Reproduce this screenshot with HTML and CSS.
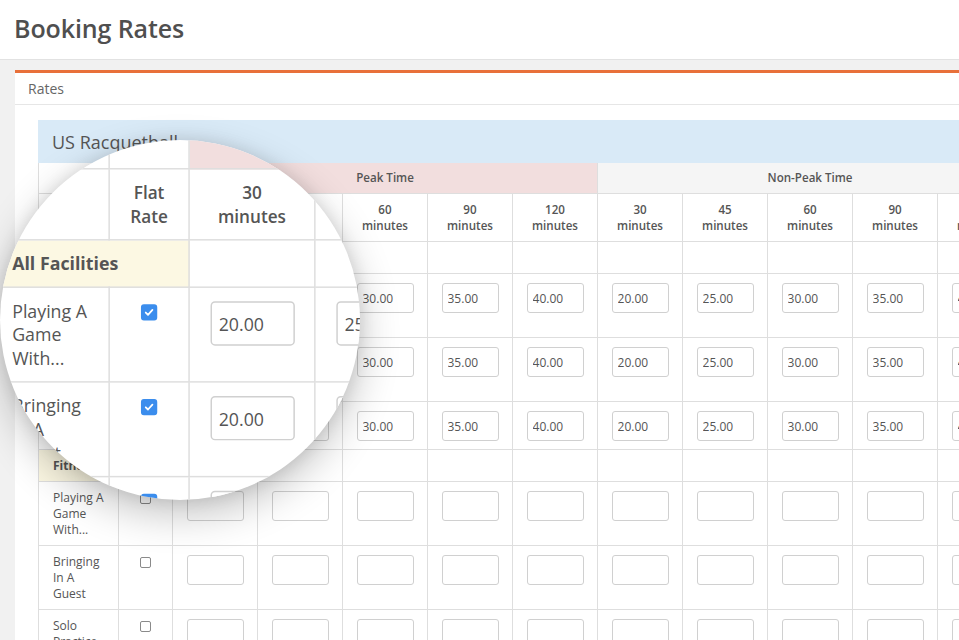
FILE: index.html
```html
<!DOCTYPE html>
<html lang="en">
<head>
<meta charset="utf-8">
<title>Booking Rates</title>
<link rel="stylesheet" href="styles.css">
</head>
<body>
<header class="topbar"><h1>Booking Rates</h1></header>
<main class="main">
  <section class="panel">
    <div class="panel-head">Rates</div>
    <div class="panel-body">
      <div class="rates-block">
        <div class="sport">US Racquetball</div>
        <table class="rates">
          <colgroup><col class="c-name"><col class="c-flat"><col span="10" class="c-rate"></colgroup>
          <thead>
            <tr class="group"><th></th><th></th><th colspan="5" class="peak">Peak Time</th><th colspan="5" class="nonpeak">Non-Peak Time</th></tr>
            <tr class="cols"><th></th><th>Flat<br>Rate</th><th>30<br>minutes</th><th>45<br>minutes</th><th>60<br>minutes</th><th>90<br>minutes</th><th>120<br>minutes</th><th>30<br>minutes</th><th>45<br>minutes</th><th>60<br>minutes</th><th>90<br>minutes</th><th>120<br>minutes</th></tr>
          </thead>
          <tbody>
            <tr class="section"><td colspan="2" class="sec-name">All Facilities</td><td></td><td></td><td></td><td></td><td></td><td></td><td></td><td></td><td></td><td></td></tr>
            <tr><td class="name">Playing A Game With...</td><td class="flat"><span class="cb on"><svg viewBox="0 0 12 12"><path d="M3 6.2l2 2 4-4.4"/></svg></span></td><td><input class="rate" value="20.00"></td><td><input class="rate" value="25.00"></td><td><input class="rate" value="30.00"></td><td><input class="rate" value="35.00"></td><td><input class="rate" value="40.00"></td><td><input class="rate" value="20.00"></td><td><input class="rate" value="25.00"></td><td><input class="rate" value="30.00"></td><td><input class="rate" value="35.00"></td><td><input class="rate" value="40.00"></td></tr>
            <tr><td class="name">Bringing In A Guest</td><td class="flat"><span class="cb on"><svg viewBox="0 0 12 12"><path d="M3 6.2l2 2 4-4.4"/></svg></span></td><td><input class="rate" value="20.00"></td><td><input class="rate" value="25.00"></td><td><input class="rate" value="30.00"></td><td><input class="rate" value="35.00"></td><td><input class="rate" value="40.00"></td><td><input class="rate" value="20.00"></td><td><input class="rate" value="25.00"></td><td><input class="rate" value="30.00"></td><td><input class="rate" value="35.00"></td><td><input class="rate" value="40.00"></td></tr>
            <tr><td class="name">Solo Practice</td><td class="flat"><span class="cb on"><svg viewBox="0 0 12 12"><path d="M3 6.2l2 2 4-4.4"/></svg></span></td><td><input class="rate" value="20.00"></td><td><input class="rate" value="25.00"></td><td><input class="rate" value="30.00"></td><td><input class="rate" value="35.00"></td><td><input class="rate" value="40.00"></td><td><input class="rate" value="20.00"></td><td><input class="rate" value="25.00"></td><td><input class="rate" value="30.00"></td><td><input class="rate" value="35.00"></td><td><input class="rate" value="40.00"></td></tr>
            <tr class="section"><td colspan="2" class="sec-name">Fitness Center</td><td></td><td></td><td></td><td></td><td></td><td></td><td></td><td></td><td></td><td></td></tr>
            <tr><td class="name">Playing A Game With...</td><td class="flat"><span class="cb"></span></td><td><input class="rate"></td><td><input class="rate"></td><td><input class="rate"></td><td><input class="rate"></td><td><input class="rate"></td><td><input class="rate"></td><td><input class="rate"></td><td><input class="rate"></td><td><input class="rate"></td><td><input class="rate"></td></tr>
            <tr><td class="name">Bringing In A Guest</td><td class="flat"><span class="cb"></span></td><td><input class="rate"></td><td><input class="rate"></td><td><input class="rate"></td><td><input class="rate"></td><td><input class="rate"></td><td><input class="rate"></td><td><input class="rate"></td><td><input class="rate"></td><td><input class="rate"></td><td><input class="rate"></td></tr>
            <tr><td class="name">Solo Practice</td><td class="flat"><span class="cb"></span></td><td><input class="rate"></td><td><input class="rate"></td><td><input class="rate"></td><td><input class="rate"></td><td><input class="rate"></td><td><input class="rate"></td><td><input class="rate"></td><td><input class="rate"></td><td><input class="rate"></td><td><input class="rate"></td></tr>
          </tbody>
        </table>
      </div>
    </div>
  </section>
</main>

<div class="lens" aria-hidden="true">
  <div class="rates-block zoomed">
    <div class="sport">US Racquetball</div>
    <table class="rates">
      <colgroup><col class="c-name"><col class="c-flat"><col span="10" class="c-rate"></colgroup>
      <thead>
        <tr class="group"><th></th><th></th><th colspan="5" class="peak">Peak Time</th><th colspan="5" class="nonpeak">Non-Peak Time</th></tr>
        <tr class="cols"><th></th><th>Flat<br>Rate</th><th>30<br>minutes</th><th>45<br>minutes</th><th>60<br>minutes</th><th>90<br>minutes</th><th>120<br>minutes</th><th>30<br>minutes</th><th>45<br>minutes</th><th>60<br>minutes</th><th>90<br>minutes</th><th>120<br>minutes</th></tr>
      </thead>
      <tbody>
        <tr class="section"><td colspan="2" class="sec-name">All Facilities</td><td></td><td></td><td></td><td></td><td></td><td></td><td></td><td></td><td></td><td></td></tr>
        <tr><td class="name">Playing A Game With...</td><td class="flat"><span class="cb on"><svg viewBox="0 0 12 12"><path d="M3 6.2l2 2 4-4.4"/></svg></span></td><td><input class="rate" value="20.00" tabindex="-1"></td><td><input class="rate" value="25.00" tabindex="-1"></td><td><input class="rate" value="30.00" tabindex="-1"></td><td><input class="rate" value="35.00" tabindex="-1"></td><td><input class="rate" value="40.00" tabindex="-1"></td><td></td><td></td><td></td><td></td><td></td></tr>
        <tr><td class="name">Bringing In A Guest</td><td class="flat"><span class="cb on"><svg viewBox="0 0 12 12"><path d="M3 6.2l2 2 4-4.4"/></svg></span></td><td><input class="rate" value="20.00" tabindex="-1"></td><td><input class="rate" value="25.00" tabindex="-1"></td><td><input class="rate" value="30.00" tabindex="-1"></td><td><input class="rate" value="35.00" tabindex="-1"></td><td><input class="rate" value="40.00" tabindex="-1"></td><td></td><td></td><td></td><td></td><td></td></tr>
        <tr><td class="name">Solo Practice</td><td class="flat"><span class="cb on"><svg viewBox="0 0 12 12"><path d="M3 6.2l2 2 4-4.4"/></svg></span></td><td><input class="rate" value="20.00" tabindex="-1"></td><td><input class="rate" value="25.00" tabindex="-1"></td><td><input class="rate" value="30.00" tabindex="-1"></td><td><input class="rate" value="35.00" tabindex="-1"></td><td><input class="rate" value="40.00" tabindex="-1"></td><td></td><td></td><td></td><td></td><td></td></tr>
        <tr class="section"><td colspan="2" class="sec-name">Fitness Center</td><td></td><td></td><td></td><td></td><td></td><td></td><td></td><td></td><td></td><td></td></tr>
        <tr><td class="name">Playing A Game With...</td><td class="flat"><span class="cb"></span></td><td><input class="rate" tabindex="-1"></td><td><input class="rate" tabindex="-1"></td><td><input class="rate" tabindex="-1"></td><td></td><td></td><td></td><td></td><td></td><td></td><td></td></tr>
      </tbody>
    </table>
  </div>
</div>
</body>
</html>
```

FILE: styles.css
```css
html, body {
  margin: 0;
  padding: 0;
  overflow: hidden;
}
body {
  position: relative;
  width: 959px;
  height: 640px;
  background: #f1f1f1;
  font-family: "Open Sans", "Noto Sans", sans-serif;
  color: #555;
}
.topbar {
  height: 60px;
  box-sizing: border-box;
  background: #fff;
  border-bottom: 1px solid #e2e2e2;
  display: flex;
  align-items: center;
  padding: 0 0 4px 14px;
}
.topbar h1 {
  margin: 0;
  font-size: 25px;
  font-weight: 600;
  color: #4f4f4f;
  letter-spacing: -0.1px;
}
.main {
  padding: 10px 0 0 15px;
}
.panel {
  width: 1100px;
  background: #fff;
  border-top: 3px solid #e8703a;
  height: 600px;
}
.panel-head {
  height: 31px;
  border-bottom: 1px solid #e6e6e6;
  display: flex;
  align-items: center;
  padding-left: 13px;
  font-size: 14px;
  color: #666;
}
.panel-body {
  padding: 15px 0 0 23px;
}
.rates-block {
  width: 984px;
}
.sport {
  height: 43px;
  box-sizing: border-box;
  background: #d9eaf7;
  display: flex;
  align-items: center;
  padding-left: 14px;
  font-size: 18px;
  color: #555;
}
.rates {
  width: 984px;
  border-collapse: collapse;
  table-layout: fixed;
  font-size: 12px;
  line-height: 16px;
  color: #555;
}
.c-name { width: 80px; }
.c-flat { width: 54px; }
.c-rate { width: 85px; }
.rates th,
.rates td {
  border: 1px solid #dedede;
  padding: 0;
}
.rates tr:first-child th { border-top: 0; }
.rates th {
  font-weight: 600;
  font-size: 11.6px;
  text-align: center;
  vertical-align: middle;
}
.rates .group th {
  height: 30px;
}
.rates .cols th {
  height: 47px;
}
.rates .peak { background: #f2dede; }
.rates .nonpeak { background: #f5f5f5; }
.rates td {
  vertical-align: top;
  text-align: center;
  padding-top: 8px;
}
.rates .section td {
  height: 31px;
  padding: 0;
}
.rates .section td.sec-name {
  background: #fcf8e3;
  font-weight: 700;
  text-align: left;
  padding: 0 0 0 14px;
  vertical-align: middle;
}
.rates td.name {
  text-align: left;
  padding: 8px 14px 7px;
}
.rates td.flat {
  padding-top: 11px;
}
.cb {
  display: inline-block;
  width: 11px;
  height: 11px;
  box-sizing: border-box;
  border: 1px solid #8a8a8a;
  border-radius: 2px;
  background: #fff;
  vertical-align: top;
}
.cb svg {
  display: block;
  width: 100%;
  height: 100%;
}
.cb svg path {
  fill: none;
  stroke: #fff;
  stroke-width: 1.6;
  stroke-linecap: round;
  stroke-linejoin: round;
}
.cb.on {
  background: #3b8ded;
  border-color: #3b8ded;
}
.rate {
  display: block;
  margin: 1px auto 0;
  width: 57px;
  height: 30px;
  box-sizing: border-box;
  border: 1px solid #d0d0d0;
  border-radius: 3px;
  padding: 0 5px;
  font-family: "Open Sans", "Noto Sans", sans-serif;
  font-size: 12px;
  color: #555;
  background: #fff;
  outline: none;
}

/* magnifier lens overlaying the table */
.lens {
  position: absolute;
  left: 0;
  top: 140px;
  width: 360px;
  height: 360px;
  border-radius: 50%;
  overflow: hidden;
  background: #fff;
  box-shadow: 0 14px 40px rgba(0, 0, 0, 0.24), 0 0 16px rgba(0, 0, 0, 0.10);
}
.lens .zoomed {
  position: absolute;
  left: -10.5px;
  top: -80.4px;
  transform: scale(1.48);
  transform-origin: 0 0;
}
```
